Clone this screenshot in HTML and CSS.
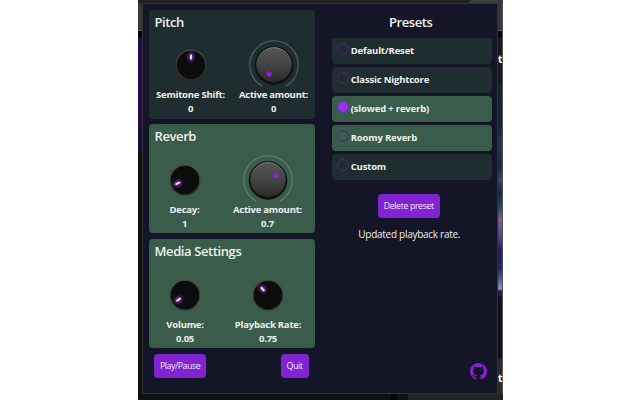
FILE: index.html
```html
<!DOCTYPE html>
<html lang="en">
<head>
<meta charset="utf-8">
<title>Presets</title>
<link rel="stylesheet" href="styles.css">
</head>
<body>
<svg width="0" height="0" class="defs">
  <defs>
    <linearGradient id="face" x1="0" y1="0" x2="0" y2="1"><stop offset="0" stop-color="#555"/><stop offset=".5" stop-color="#444"/><stop offset="1" stop-color="#292929"/></linearGradient>
    <linearGradient id="edge" x1="0" y1="0" x2="0" y2="1"><stop offset="0" stop-color="#858585"/><stop offset=".5" stop-color="#3c3c3c"/><stop offset="1" stop-color="#181818"/></linearGradient>
    <linearGradient id="rim" x1="0" y1="0" x2="0" y2="1"><stop offset="0" stop-color="#4c484a"/><stop offset="1" stop-color="#2c2b2b"/></linearGradient>
    <radialGradient id="glow"><stop offset="0" stop-color="#a55ce0" stop-opacity=".95"/><stop offset=".5" stop-color="#6a3390" stop-opacity=".65"/><stop offset="1" stop-color="#4b2070" stop-opacity="0"/></radialGradient>
    <g id="small"><circle cx="25" cy="25" r="14.8" fill="#0c0c0d" stroke="url(#rim)" stroke-width="1.2"/></g>
    <g id="mark"><ellipse cx="25" cy="17" rx="5" ry="6.5" fill="url(#glow)"/><rect x="24.1" y="14.4" width="1.8" height="5.2" rx=".6" fill="#f1e4f8"/></g>
    <g id="big">
      <path d="M13.5 46.3A24.2 24.2 0 1 1 36.5 46.3" fill="none" stroke="#c8dcd4" stroke-opacity=".3" stroke-width="1.1"/>
      <circle cx="25" cy="25.5" r="19.2" fill="#0d0e0e"/>
      <circle cx="25" cy="25" r="17.3" fill="url(#face)" stroke="url(#edge)"/>
    </g>
  </defs>
</svg>
<div class="page">
  <div class="page-top"><i></i></div>
  <div class="page-left"></div>
  <div class="page-right"><b>t</b><b class="low">t</b></div>
  <div class="page-bottom"><i></i></div>
  <main class="popup">
    <div class="left">
      <section class="box">
        <h2>Pitch</h2>
        <div class="knobs">
          <div class="knob"><svg viewBox="0 0 50 50"><use href="#small"/><use href="#mark"/></svg><span>Semitone Shift:</span><span>0</span></div>
          <div class="knob"><svg viewBox="0 0 50 50"><use href="#big"/><rect class="dot" x="17.6" y="31.6" width="4.8" height="4.8" rx="1" transform="rotate(30 20 34)"/></svg><span>Active amount:</span><span>0</span></div>
        </div>
      </section>
      <section class="box on">
        <h2>Reverb</h2>
        <div class="knobs shifted">
          <div class="knob"><svg viewBox="0 0 50 50"><use href="#small"/><use href="#mark" transform="rotate(-115 25 25)"/></svg><span>Decay:</span><span>1</span></div>
          <div class="knob"><svg viewBox="0 0 50 50"><use href="#big"/><rect class="dot" x="30.6" y="18.2" width="4.8" height="4.8" rx="1" transform="rotate(65 33 20.6)"/></svg><span>Active amount:</span><span>0.7</span></div>
        </div>
      </section>
      <section class="box on">
        <h2>Media Settings</h2>
        <div class="knobs shifted media">
          <div class="knob"><svg viewBox="0 0 50 50"><use href="#small"/><use href="#mark" transform="rotate(-126 25 25)"/></svg><span>Volume:</span><span>0.05</span></div>
          <div class="knob"><svg viewBox="0 0 50 50"><use href="#small"/><use href="#mark" transform="rotate(-42 25 25)"/></svg><span>Playback Rate:</span><span>0.75</span></div>
        </div>
      </section>
      <div class="actions"><button class="play">Play/Pause</button><button class="quit">Quit</button></div>
    </div>
    <div class="right">
      <h2>Presets</h2>
      <ul>
        <li><svg viewBox="0 0 12 12"><circle cx="6" cy="6" r="5.4"/></svg><span>Default/Reset</span></li>
        <li><svg viewBox="0 0 12 12"><circle cx="6" cy="6" r="5.4"/></svg><span>Classic Nightcore</span></li>
        <li class="on checked"><svg viewBox="0 0 12 12"><circle cx="6" cy="6" r="5.4"/></svg><span>(slowed + reverb)</span></li>
        <li class="on"><svg viewBox="0 0 12 12"><circle cx="6" cy="6" r="5.4"/></svg><span>Roomy Reverb</span></li>
        <li><svg viewBox="0 0 12 12"><circle cx="6" cy="6" r="5.4"/></svg><span>Custom</span></li>
      </ul>
      <button class="delete">Delete preset</button>
      <p>Updated playback rate.</p>
      <svg class="github" viewBox="0 0 16 16"><path fill="#8223d2" d="M8 0C3.58 0 0 3.58 0 8c0 3.54 2.29 6.53 5.47 7.59.4.07.55-.17.55-.38 0-.19-.01-.82-.01-1.49-2.01.37-2.53-.49-2.69-.94-.09-.23-.48-.94-.82-1.13-.28-.15-.68-.52-.01-.53.63-.01 1.08.58 1.23.82.72 1.21 1.87.87 2.33.66.07-.52.28-.87.51-1.07-1.78-.2-3.64-.89-3.64-3.95 0-.87.31-1.59.82-2.15-.08-.2-.36-1.02.08-2.12 0 0 .67-.21 2.2.82.64-.18 1.32-.27 2-.27s1.36.09 2 .27c1.53-1.04 2.2-.82 2.2-.82.44 1.1.16 1.92.08 2.12.51.56.82 1.27.82 2.15 0 3.07-1.87 3.75-3.65 3.95.29.25.54.73.54 1.48 0 1.07-.01 1.93-.01 2.2 0 .21.15.46.55.38A8.01 8.01 0 0 0 16 8c0-4.42-3.58-8-8-8z"/></svg>
    </div>
  </main>
</div>
</body>
</html>
```
FILE: styles.css
```css
* { box-sizing: border-box; margin: 0; padding: 0; }
body { width: 640px; height: 400px; overflow: hidden; background: #fff; font-family: "Open Sans", "Noto Sans", sans-serif; color: #eef0f2; }
.defs { display: block; }
.page { width: 364.5px; height: 400px; margin-left: 138px; background: #111; overflow: hidden; display: grid; grid-template: 3px 391px 6px / 4px 356px 4.5px; }
.page-top { grid-area: 1 / 1 / 2 / 4; background: #202123; display: flex; justify-content: flex-end; }
.page-top i { width: 34px; background: #3b3b3d; border-top-left-radius: 4px; }
.page-left { grid-area: 2 / 1; background: linear-gradient(#38383b 0 27px, #606063 27px 28px, #000 28px 34px, #230a4e 34px 60px, #260b54 100px, #1b0b30 151px, #111 152px); }
.page-right { grid-area: 2 / 3; position: relative; border-right: 1px solid #555860; background: linear-gradient(#38383b 0 27px, #606063 27px 28px, #000 28px 34px, #191919 34px 79px, #17202e 80px, #1a2034 120px, #283052 140px, #182642 165px, #34476a 176px, #1c2344 190px, #1d4553 203px, #76638f 216px, #55417c 235px, #22205a 246px, #252063 265px, #626488 278px, #9093b3 286px, #242044 288px 293px, #111 294px 355px, #292929 356px); }
.page-right b { position: absolute; left: 0; top: 49px; font-size: 10px; line-height: 15px; color: #fff; }
.page-right .low { top: 368px; }
.page-bottom { grid-area: 3 / 1 / 4 / 4; display: flex; justify-content: flex-end; background: #111; }
.page-bottom i { width: 112px; background: linear-gradient(90deg, #000 0 6px, #111 6px 17px, #242424 17px); }
.popup { grid-area: 2 / 2; background: #141526; border: 1px solid #303238; display: flex; }
.left { width: 171.5px; padding: 5.5px 0 0 6px; }
.box { height: 109px; margin-bottom: 5.7px; border-radius: 4px; background: #202d30; }
.on { background: #3a5c4a !important; }
h2 { font-weight: 600; font-size: 13px; line-height: 18px; letter-spacing: -.4px; }
.box h2 { height: 21px; padding: 3px 0 0 5.5px; }
.knobs { display: grid; grid-template-columns: 83px 83px; padding-top: 9px; }
.shifted { margin-left: -6px; padding-top: 9.8px; }
.media { margin-left: -5.5px; }
.knob { display: flex; flex-direction: column; align-items: center; font-weight: 700; font-size: 9.5px; letter-spacing: -.22px; line-height: 14px; white-space: nowrap; }
.knob svg { width: 50px; height: 50px; display: block; overflow: visible; }
.knob span:nth-of-type(1) { margin-top: -2px; }
.dot { fill: #911ddb; }
.actions { display: flex; justify-content: space-between; padding: .6px 6px 0 5px; }
button { height: 24px; border: 0; border-radius: 4px; background: #8023d0; color: #f0e6fa; font: 500 8.8px/24px "Open Sans", "Noto Sans", sans-serif; letter-spacing: -.38px; white-space: nowrap; }
.play { width: 52px; letter-spacing: -.45px; }
.quit { width: 28px; }
.right { flex: 1; display: flex; flex-direction: column; align-items: center; padding: 9px 5px 0 17px; }
.right h2 { margin-right: 2px; }
ul { width: 160px; list-style: none; margin: 7px 0 14px; display: grid; gap: 3px; }
li { height: 26px; border-radius: 4px; background: #202d30; display: flex; align-items: flex-start; padding: 5px 0 0 5px; font-weight: 700; font-size: 9.5px; letter-spacing: -.18px; line-height: 16px; white-space: nowrap; }
li svg { width: 12px; height: 12px; margin-right: 2px; flex: none; }
li circle { fill: none; stroke: #552583; stroke-width: 1; }
.checked circle { fill: #9333ea; stroke: #702bbb; }
.delete { width: 61.5px; margin-right: 6px; }
p { font-size: 10px; letter-spacing: -.28px; line-height: 14px; margin: 9px 5px 0 0; white-space: nowrap; }
.github { width: 17px; height: 17px; margin: auto 5.5px 13px auto; }
```
